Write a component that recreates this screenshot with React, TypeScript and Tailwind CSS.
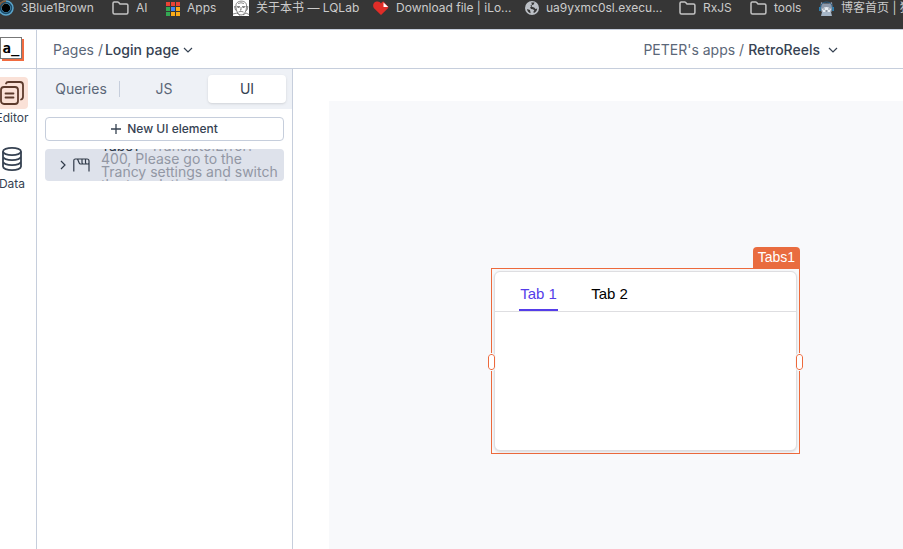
import type { ReactNode } from "react";

function FolderIcon() {
  return (
    <svg width="17" height="14" viewBox="0 0 17 14" fill="none" stroke="#c3c3c3" strokeWidth="1.5" strokeLinejoin="round">
      <path d="M1 11.5V2.2C1 1.5 1.4 1 2.2 1h3.4c.5 0 .8.2 1.100.5l1.300 1.500h6.500c.9 0 1.400.5 1.400 1.300v7.200c0 .9-.5 1.500-1.400 1.500H2.500C1.500 13 1 12.400 1 11.500Z" />
    </svg>
  );
}

function RingIcon() {
  return (
    <svg width="16" height="16" viewBox="0 0 16 16">
      <circle cx="8" cy="8" r="6" fill="#000" stroke="#5ba5cb" strokeWidth="3.500" />
      <path d="M8 2a6 6 0 0 0-6 6" fill="none" stroke="#8b5b35" strokeWidth="3.500" />
      <circle cx="8" cy="8" r="5.500" fill="none" stroke="#1b4c6c" strokeWidth="1.500" />
    </svg>
  );
}

const appDots = ["#ea4335", "#ea4335", "#ea4335", "#34a853", "#4285f4", "#fbab17", "#34a853", "#fbab17", "#fbab17"];

function AppsIcon() {
  return (
    <svg width="14" height="15" viewBox="0 0 14 15">
      {appDots.map((c, i) => (
        <rect key={i} x={(i % 3) * 5} y={Math.floor(i / 3) * 5 + 1} width="4" height="4" fill={c} />
      ))}
    </svg>
  );
}

function FaceIcon() {
  return (
    <svg width="16" height="16" viewBox="0 0 16 16" fill="none" stroke="#555" strokeWidth=".7">
      <path fill="#fff" stroke="none" d="M0 0h16v16H0z" />
      <path d="M3 6C2 0 14-1 13.500 6c0 5-2 9-5.500 9S3 10 3 6ZM3 7 1.500 6.500 2.500 10l1 .5M13.500 7l1.500-.5-1 3.500-1 .5M4 6.500h3M9 6.500h3.500M8 7v3H7M5.500 12q2.500-1.500 5 0M0 14l4-1 3 2.500M10 15l3-2 3 1.500M5 3.500q3-1.500 6 0" />
      <path d="M4.500 7.500h2M9.500 7.500h2" stroke="#444" />
    </svg>
  );
}

function HeartIcon() {
  return (
    <svg width="16" height="14" viewBox="0 0 16 14">
      <path fill="#e02d28" d="M8 14 1 7.300C-.7 5.500 0 1.200 3.600.6 5.700.2 7.200 1.300 8 2.500 8.700 1.300 9.500.8 10.500.6L15.500 6 15 7.300Z" />
      <path fill="#fff" d="M10.500 1.500 15.200 6h-4.700Z" />
    </svg>
  );
}

function GlobeIcon() {
  return (
    <svg width="14" height="14" viewBox="0 0 14 14">
      <circle cx="7" cy="7" r="7" fill="#bcc0c6" />
      <path fill="#383838" d="M6.200 1.500h3.300l-.8 2-2 .8v1.500l2.500.7 1.300 1.400 1.700-.4c-.1 2-1.400 3.800-3.200 4.600l-.7-1.200 1-1.600-1.500-1-1.800-.2-.9-1.500 1-1L5.500 4.600l1.500-1Z" />
      <path fill="#383838" d="m2 8 3 1 .7 3.300C3.600 11.700 2.200 10 2 8Z" />
    </svg>
  );
}

function CatIcon() {
  return (
    <svg width="15" height="15" viewBox="0 0 15 15">
      <path fill="#8e9aab" d="M2 1 5 2.500h5L13 1l.5 5-1 5h-10l-1-5Z" />
      <path d="M1.500 7Q2 1 7.500 1t6 6" fill="none" stroke="#285c83" strokeWidth="1" />
      <path fill="#e7edf3" d="M3 8q4.500-4 9 0l-1 3.500H4Z" />
      <path fill="#2f7fb0" d="M0 6h1.800v4H0zM13.200 6H15v4h-1.800z" />
      <path fill="#a6b6c7" d="m2 15 1-4h9l1 4Z" />
      <path stroke="#273447" d="M4.500 8h1M9.500 8h1M6.500 10h2" />
    </svg>
  );
}

type BookmarkProps = { icon: ReactNode; label: string };

const bookmarks: BookmarkProps[] = [
  { icon: <RingIcon />, label: "3Blue1Brown" },
  { icon: <FolderIcon />, label: "AI" },
  { icon: <AppsIcon />, label: "Apps" },
  { icon: <FaceIcon />, label: "关于本书 — LQLab" },
  { icon: <HeartIcon />, label: "Download file | iLo..." },
  { icon: <GlobeIcon />, label: "ua9yxmc0sl.execu..." },
  { icon: <FolderIcon />, label: "RxJS" },
  { icon: <FolderIcon />, label: "tools" },
  { icon: <CatIcon />, label: "博客首页 | 猫头" },
];

function Bookmark({ icon, label }: BookmarkProps) {
  return (
    <a href="#" className="flex items-center gap-[7px] whitespace-nowrap">
      {icon}
      {label}
    </a>
  );
}

function Chevron() {
  return (
    <svg width="10" height="10" viewBox="0 0 10 10" fill="none" stroke="currentColor" strokeWidth="1.200">
      <path d="m1 3 4 4 4-4" />
    </svg>
  );
}

function EditorIcon() {
  return (
    <svg width="24" height="24" viewBox="0 0 24 24" fill="none" stroke="#5c3a2c" strokeWidth="1.800" strokeLinecap="round" strokeLinejoin="round">
      <rect x="1" y="6" width="17" height="17" rx="3" />
      <path d="M6 2.500Q6.500 1 8.500 1H20q3 0 3 3v11.500q0 2.500-2 3M5.500 12.500h8M5.500 16.500h8" />
    </svg>
  );
}

function DatabaseIcon() {
  return (
    <svg width="20" height="24" viewBox="0 0 20 24" fill="none" stroke="#364252" strokeWidth="1.800">
      <ellipse cx="10" cy="4.500" rx="9" ry="3.600" />
      <path d="M1 4.500v15C1 21.500 5 23.100 10 23.100s9-1.600 9-3.600v-15M1 9.500c0 2 4 3.600 9 3.600s9-1.600 9-3.600M1 14.500c0 2 4 3.600 9 3.600s9-1.600 9-3.600" />
    </svg>
  );
}

function TabsIcon() {
  return (
    <svg width="17" height="14" viewBox="0 0 17 14" fill="none" stroke="#303a49" strokeWidth="1.200">
      <path d="M.8 13.500V2.500Q.8 1 2.300 1h11.700q2 0 2 2v10.500M4.500 1l1.700 4q.4 1 1.300 1h7.200q1.300 0 1.300-1M9 1v3.500q0 1.500 1.500 1.500M12.500 1v3.500q0 1.500 1.500 1.500" />
    </svg>
  );
}

function Rail() {
  return (
    <nav className="-ml-3 flex w-[49px] shrink-0 flex-col items-center border-r border-[#c6cedc] pt-2 text-xs leading-4 text-[#364252]">
      <button className="flex flex-col items-center gap-px">
        <span className="flex size-8 items-center justify-center rounded bg-[#fae1d7]">
          <EditorIcon />
        </span>
        Editor
      </button>
      <button className="mt-[21px] flex flex-col items-center gap-[5px]">
        <DatabaseIcon />
        Data
      </button>
    </nav>
  );
}

function Explorer() {
  return (
    <aside className="w-64 shrink-0 border-r border-[#c6cedc]">
      <div className="flex h-10 items-center bg-[#eef1f6] px-1.5 text-sm text-[#5b6778]">
        <button className="h-7 w-[76px]">Queries</button>
        <span className="h-4 w-px bg-[#c6cedc]" />
        <button className="h-7 flex-1">JS</button>
        <button className="h-7 w-[78px] rounded bg-white text-[#364252] shadow">UI</button>
      </div>
      <div className="flex flex-col gap-2 p-2">
        <button className="flex h-6 items-center justify-center gap-1.5 rounded border border-[#c6cedc] text-xs font-medium text-[#364252]">
          <svg width="10" height="10" viewBox="0 0 10 10" stroke="currentColor" strokeWidth="1.300">
            <path d="M5 0v10M0 5h10" />
          </svg>
          New UI element
        </button>
        <div className="flex h-8 items-center overflow-hidden rounded bg-[#dee2eb] pl-3.5 text-[#303a49]">
          <svg width="8" height="10" viewBox="0 0 8 10" fill="none" stroke="currentColor" strokeWidth="1.200">
            <path d="m2 1 4 4-4 4" />
          </svg>
          <span className="ml-1.5">
            <TabsIcon />
          </span>
          <div className="ml-[11px] w-[182px] shrink-0 text-sm leading-[13px] text-[#9297a4]">
            <span className="text-[#303a49]">Tabs1</span>&nbsp;&nbsp; Translate:Error:
            <br />
            400, Please go to the
            <br />
            Trancy settings and switch the translation engine
          </div>
        </div>
      </div>
    </aside>
  );
}

function Canvas() {
  return (
    <main className="flex min-w-0 flex-1 pt-8 pl-9">
      <div className="relative flex-1 bg-[#f8f9fb] font-['Liberation_Sans',Arial,sans-serif]">
        <div className="absolute top-[167px] left-[162px] h-[186px] w-[309px] border border-[#ed6a3c] p-0.5">
          <div className="absolute right-[-1px] bottom-full flex h-[22px] items-center rounded-t-sm bg-[#e96c3f] px-[5px] pb-0.5 text-sm text-white">
            Tabs1
          </div>
          <section className="h-full rounded-md border border-[#dedee1] bg-white shadow-sm">
            <div role="tablist" className="flex h-10 items-end gap-8 border-b border-[#dedee1] px-6 text-[15px] text-black">
              <button role="tab" aria-selected="true" className="h-8 min-w-[39px] border-b-2 border-[#553de9] pt-px text-[#553de9]">
                Tab 1
              </button>
              <button role="tab" aria-selected="false" className="h-8 min-w-[39px] border-b-2 border-transparent pt-px">
                Tab 2
              </button>
            </div>
          </section>
          <span className="absolute top-[85px] left-[-4px] h-4 w-[7px] rounded-[3px] border border-[#ed6a3c] bg-white outline outline-[#f8f9fb]" />
          <span className="absolute top-[85px] right-[-4px] h-4 w-[7px] rounded-[3px] border border-[#ed6a3c] bg-white outline outline-[#f8f9fb]" />
        </div>
      </div>
    </main>
  );
}

export default function App() {
  return (
    <div className="flex min-h-screen flex-col overflow-hidden bg-white font-['Inter','Noto_Sans_CJK_SC',sans-serif]">
      <div className="-ml-0.5 grid h-[29px] shrink-0 grid-cols-[114px_54px_67px_140px_152px_154px_71px_69px_auto] items-center overflow-hidden bg-[#363636] pb-[13px] text-xs text-[#cbcbcb]">
        {bookmarks.map((b) => (
          <Bookmark key={b.label} icon={b.icon} label={b.label} />
        ))}
      </div>
      <header className="flex h-10 shrink-0 items-center border-y border-[#c6cedc] text-sm text-[#5b6778]">
        <div className="flex h-full w-[37px] shrink-0 items-center border-r border-[#c6cedc]">
          <div className="mb-0.5 flex size-[22px] items-center justify-center border border-[#777] bg-white font-['DejaVu_Sans_Mono',monospace] text-sm leading-none font-bold text-black shadow-[2px_2px_0_#f16b40]">
            a_
          </div>
        </div>
        <div className="flex items-center gap-0.5 pt-0.5 pl-4">
          <span>Pages /</span>
          <button className="flex items-center gap-1 font-medium text-[#364252]">
            Login page
            <Chevron />
          </button>
        </div>
        <div className="ml-auto flex items-center gap-1 pt-0.5 pr-[65px]">
          <span>PETER's apps /</span>
          <button className="flex items-center gap-2 font-medium text-[#364252]">
            RetroReels
            <Chevron />
          </button>
        </div>
      </header>
      <div className="flex flex-1">
        <Rail />
        <Explorer />
        <Canvas />
      </div>
    </div>
  );
}
